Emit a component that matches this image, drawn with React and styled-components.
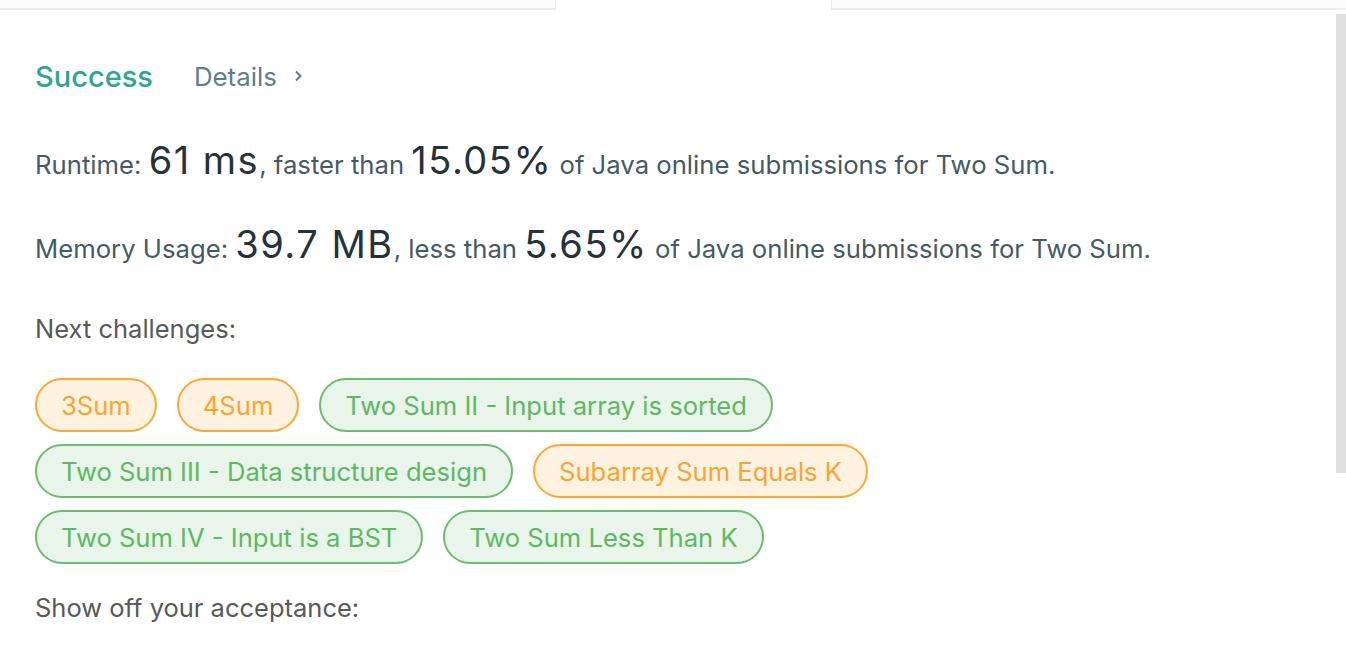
import React from "react";
import styled, { createGlobalStyle } from "styled-components";

const GlobalStyle = createGlobalStyle`
  body {
    margin: 0;
    background: #fff;
    overflow: hidden;
    font-family: Inter, "Liberation Sans", sans-serif;
  }
`;

const challenges = [
  { title: "3Sum", level: "medium" },
  { title: "4Sum", level: "medium" },
  { title: "Two Sum II - Input array is sorted", level: "easy" },
  { title: "Two Sum III - Data structure design", level: "easy" },
  { title: "Subarray Sum Equals K", level: "medium" },
  { title: "Two Sum IV - Input is a BST", level: "easy" },
  { title: "Two Sum Less Than K", level: "easy" },
];

const App = () => {
  return (
    <>
      <GlobalStyle />
      <Page>
        <TabBar>
          <Tab $width="555px" />
          <Tab $active $width="277px" />
          <Tab />
        </TabBar>

        <Content>
          <Header>
            <Status>Success</Status>
            <DetailsLink>
              Details
              <svg width="10" height="12" viewBox="0 0 10 12">
                <polyline
                  points="3,1.5 7.5,6 3,10.5"
                  fill="none"
                  stroke="#607d8b"
                  strokeWidth="2"
                />
              </svg>
            </DetailsLink>
          </Header>

          <Stat>
            Runtime: <Big>61 ms</Big>, faster than <Big>15.05%</Big> of Java
            online submissions for Two Sum.
          </Stat>
          <Stat>
            Memory Usage: <Big>39.7 MB</Big>, less than <Big>5.65%</Big> of
            Java online submissions for Two Sum.
          </Stat>

          <Label>Next challenges:</Label>
          <Tags>
            {challenges.map((c) => (
              <TagItem key={c.title} $level={c.level}>
                {c.title}
              </TagItem>
            ))}
          </Tags>

          <Label $bottom>Show off your acceptance:</Label>
        </Content>

        <Scrollbar />
      </Page>
    </>
  );
};

const Page = styled.div`
  position: relative;
  width: 1346px;
  height: 652px;
  overflow: hidden;
`;

const TabBar = styled.div`
  display: flex;
  height: 10px;
`;

const Tab = styled.div`
  box-sizing: border-box;
  flex: ${({ $width }) => ($width ? `0 0 ${$width}` : "1")};
  background: ${({ $active }) => ($active ? "#fff" : "#fafafa")};
  border-bottom: ${({ $active }) => ($active ? "none" : "2px solid #ececec")};
  border-left: ${({ $active }) => ($active ? "1px solid #ececec" : "none")};
  border-right: ${({ $active }) => ($active ? "1px solid #ececec" : "none")};
`;

const Content = styled.div`
  padding: 48px 0 0 35px;
`;

const Header = styled.div`
  display: flex;
  align-items: center;
  gap: 41px;
  height: 36px;
`;

const Status = styled.span`
  font-size: 29px;
  font-weight: 500;
  color: #2ea594;
`;

const DetailsLink = styled.span`
  display: flex;
  align-items: center;
  gap: 16px;
  font-size: 25.8px;
  color: #607d8b;
`;

const Stat = styled.div`
  margin-top: 44px;
  font-size: 25.7px;
  line-height: 44px;
  color: #455a64;

  & + & {
    margin-top: 35px;
  }
`;

const Big = styled.span`
  font-size: 38px;
  letter-spacing: 1.5px;
  color: #263238;
`;

const Label = styled.div`
  margin-top: ${({ $bottom }) => ($bottom ? "28px" : "42px")};
  font-size: 25.5px;
  line-height: 32px;
  color: #595959;
`;

const Tags = styled.div`
  display: flex;
  flex-wrap: wrap;
  gap: 12px 20px;
  margin-top: 33px;
  max-width: 900px;
`;

const TagItem = styled.span`
  box-sizing: border-box;
  height: 54px;
  display: flex;
  align-items: center;
  padding: 0 24px;
  border-radius: 27px;
  font-size: 25.6px;
  border: 2px solid ${({ $level }) => ($level === "easy" ? "#6dbb71" : "#ffa733")};
  background: ${({ $level }) => ($level === "easy" ? "#e9f4ea" : "#fff2e0")};
  color: ${({ $level }) => ($level === "easy" ? "#5eb862" : "#ffa22e")};
`;

const Scrollbar = styled.div`
  position: absolute;
  top: 14px;
  right: 0;
  width: 10px;
  height: 459px;
  background: #e0e0e0;
`;

export default App;
